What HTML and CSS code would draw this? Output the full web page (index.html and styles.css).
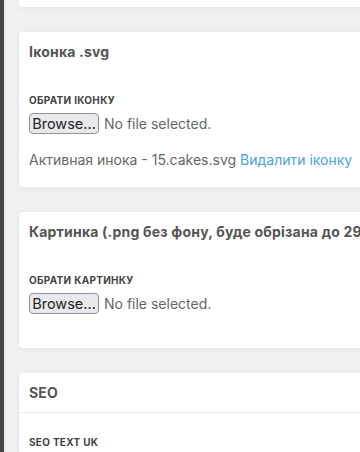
FILE: index.html
```html
<!doctype html>
<html lang="uk">
<head>
    <meta name="viewport" content="width=device-width, initial-scale=1.0">
    <meta charset="UTF-8">
    <title>Категорія</title>
    <link rel="stylesheet" href="styles.css">
</head>
<body>
<div class="layout">
    <div class="sidebar"></div>
    <div class="content">
        <div class="card card-prev"></div>

        <div class="card">
            <div class="card-header">
                <h4 class="card-title">Іконка .svg</h4>
            </div>
            <div class="card-body">
                <div class="form-group">
                    <label class="form-label">Обрати іконку</label>
                    <div class="file-input">
                        <span class="file-btn">Browse...</span>
                        <span class="file-name">No file selected.</span>
                    </div>
                </div>
                <p class="active-file">Активная инока - 15.cakes.svg <a href="#" class="link">Видалити іконку</a></p>
            </div>
        </div>

        <div class="card">
            <div class="card-header">
                <h4 class="card-title">Картинка (.png без фону, буде обрізана до 290x290)</h4>
            </div>
            <div class="card-body">
                <div class="form-group">
                    <label class="form-label">Обрати картинку</label>
                    <div class="file-input">
                        <span class="file-btn">Browse...</span>
                        <span class="file-name">No file selected.</span>
                    </div>
                </div>
            </div>
        </div>

        <div class="card">
            <div class="card-header bordered">
                <h4 class="card-title">SEO</h4>
            </div>
            <div class="card-body">
                <div class="form-group">
                    <label class="form-label">SEO text uk</label>
                </div>
            </div>
        </div>
    </div>
</div>
</body>
</html>
```
FILE: styles.css
```css
body {
    margin: 0;
    font-family: Inter, "Open Sans", sans-serif;
    background-color: #f0f0f2;
    color: #666;
    overflow: hidden;
}

.layout {
    display: flex;
    height: 452px;
    overflow: hidden;
}

.sidebar {
    flex: 0 0 4px;
    background-color: #454545;
}

.content {
    flex: 0 0 700px;
    padding-left: 15px;
    background: linear-gradient(to right, #e6e6e8, #f0f0f2 4px);
}

.card {
    background-color: #fff;
    border-radius: 4px;
    box-shadow: 0 1px 6px rgba(0, 0, 0, 0.06);
    margin-bottom: 25px;
}

.card-prev {
    height: 7px;
    border-top-left-radius: 0;
    border-top-right-radius: 0;
}

.card-header {
    padding: 11px 10px;
}

.card-header.bordered {
    border-bottom: 1px solid #e8e8e8;
}

.card-title {
    margin: 0;
    font-size: 14px;
    line-height: 17px;
    font-weight: 700;
    letter-spacing: 0.2px;
    color: #555;
    white-space: nowrap;
}

.card-body {
    padding: 24px 10px 18px;
}

.form-group {
    margin-bottom: 16px;
}

.form-label {
    display: block;
    font-size: 10px;
    line-height: 11px;
    font-weight: 700;
    letter-spacing: 0.3px;
    text-transform: uppercase;
    color: #444;
    margin-bottom: 7px;
}

.file-input {
    display: flex;
    align-items: center;
    gap: 5px;
}

.file-btn {
    display: inline-block;
    box-sizing: border-box;
    width: 70px;
    height: 21px;
    line-height: 19px;
    text-align: center;
    font-size: 14.5px;
    color: #222;
    background-color: #e9e9ed;
    border: 1px solid #8f8f9d;
    border-radius: 4px;
}

.file-name {
    font-size: 14px;
    color: #666;
}

.active-file {
    margin: 0;
    font-size: 14px;
    line-height: 19px;
    white-space: nowrap;
}

.link {
    color: #4aa3df;
    text-decoration: none;
}
```
